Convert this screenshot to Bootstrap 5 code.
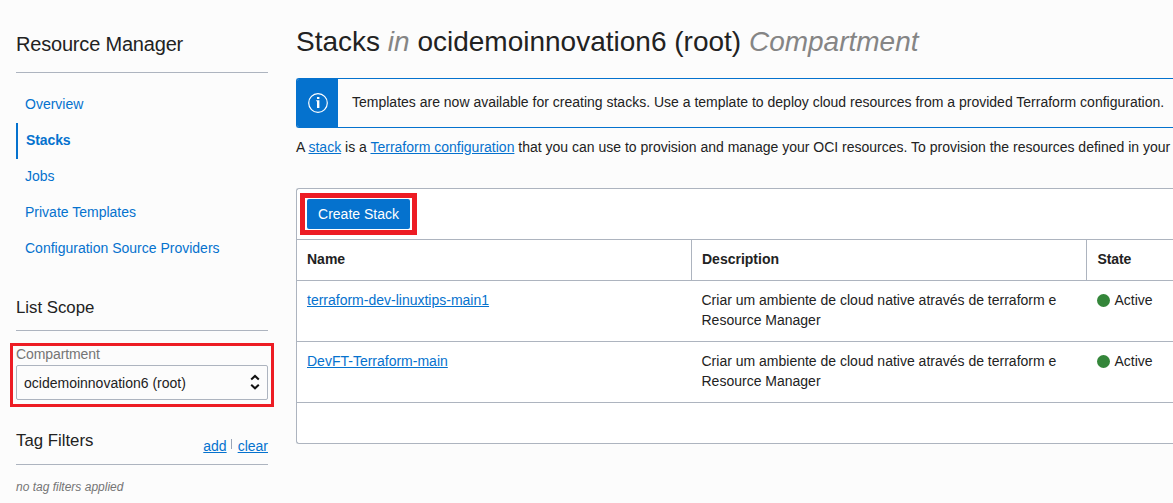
<!DOCTYPE html>
<html lang="en">
<head>
<meta charset="utf-8">
<meta name="viewport" content="width=device-width, initial-scale=1">
<title>Resource Manager - Stacks</title>
<link href="https://cdn.jsdelivr.net/npm/bootstrap@5.3.0/dist/css/bootstrap.min.css" rel="stylesheet">
<style>
  :root { --line: #adb4bf; --blue: #0572ce; --red: #ed1c24; }
  body { font: 14px/20px "Liberation Sans", Arial, sans-serif; color: #222; background: #fcfcfc; height: 503px; }
  a { color: var(--blue); text-underline-offset: 1px; }
  h1, h2, h3 { font-weight: 400; margin: 0; color: #222; }
  .side { width: 252px; margin-left: 16px; }
  .side h2 { font-size: 20px; line-height: 24px; letter-spacing: -.19px; padding: 32px 0 16px; border-bottom: 1px solid var(--line); }
  .side h3 { font-size: 16.8px; line-height: 20px; }
  .side-nav { padding-top: 14px; }
  .side-nav .nav-link { padding: 7px 9px 9px; color: var(--blue); }
  .side-nav .nav-link.active { padding-left: 8px; border-left: 2px solid var(--blue); font-weight: 700; letter-spacing: -.1px; }
  .scope-title { margin-top: 31px !important; padding-bottom: 12px; border-bottom: 1px solid var(--line); }
  .scope-box { margin: 12px -6px 0; border: 3px solid var(--red); height: 64px; padding: 0 3px; }
  .scope-box label { color: #757575; line-height: 17px; height: 19px; display: block; letter-spacing: -.1px; }
  .picker { height: 35px; border: 1px solid var(--line); border-radius: 2px; padding: 0 7px; background: #fcfcfc; }
  .picker svg { margin-top: -2px; }
  .tags { margin-top: 24px; height: 34px; border-bottom: 1px solid var(--line); }
  .tag-links { padding-top: 5px; }
  .tag-links i { width: 1px; height: 10px; margin: 3px 6px 0 4px; background: #9aa5b8; }
  .no-tags { font-size: 12px; font-style: italic; color: #757575; margin-top: 12px; }
  .main-area { margin-left: 28px; min-width: 0; }
  h1 { font-size: 28px; line-height: 32px; padding-top: 26px; white-space: nowrap; }
  h1 em { color: #858585; }
  .notice { margin-top: 20px; height: 50px; border: 1px solid var(--blue); border-right: 0; border-radius: 3px 0 0 3px; overflow: hidden; }
  .notice-icon { width: 41px; background: var(--blue); }
  .notice-text { padding: 13px 0 13px 14px; white-space: nowrap; }
  .intro { margin: 9px 0 0; white-space: nowrap; }
  .stack-list { margin-top: 31px; border: 1px solid var(--line); border-right: 0; border-radius: 3px 0 0 3px; background: #fff; height: 256px; }
  .toolbar { height: 50px; padding: 4px 3px; }
  .mark-box { border: 5px solid var(--red); width: 117px; height: 42px; padding: 1px 2px; }
  .btn-create { width: 103px; height: 30px; padding: 0; border: 0; border-radius: 2px; background: var(--blue); color: #fff; font-size: 14px; line-height: 30px; }
  .stack-table { table-layout: fixed; margin: 0; width: 100%; }
  .stack-table > :not(caption) > * > * { padding: 9px 0 11px 10px; border: 0; border-top: 1px solid var(--line); color: #222; background: transparent; }
  .stack-table > tbody > tr:last-child > td { border-bottom: 1px solid var(--line); }
  .stack-table > thead > tr > th + th { border-left: 1px solid var(--line); padding-left: 10.5px; }
  .stack-table > thead > tr > th:last-child { padding-left: 11px; letter-spacing: -.1px; }
  .stack-table > tbody > tr > td:nth-child(2) { padding: 9px 20px 11px 10.5px; }
  .stack-table > tbody > tr > td:last-child { padding-left: 10.5px; }
  .dot { display: inline-block; width: 13px; height: 13px; border-radius: 50%; background: #34863a; vertical-align: -2px; margin-right: 5px; }
</style>
</head>
<body class="overflow-hidden">
<div class="d-flex">
  <aside class="side flex-shrink-0">
    <h2>Resource Manager</h2>
    <nav class="nav flex-column side-nav">
      <a class="nav-link" href="#">Overview</a>
      <a class="nav-link active" href="#">Stacks</a>
      <a class="nav-link" href="#">Jobs</a>
      <a class="nav-link" href="#">Private Templates</a>
      <a class="nav-link" href="#">Configuration Source Providers</a>
    </nav>
    <h3 class="scope-title">List Scope</h3>
    <div class="scope-box">
      <label>Compartment</label>
      <div class="picker d-flex align-items-center justify-content-between">
        <span>ocidemoinnovation6 (root)</span>
        <svg width="10" height="16" viewBox="0 0 10 16" fill="none" stroke="#111" stroke-width="2"><path d="M1.2 5.5 5 1.9l3.8 3.6M1.2 10.7 5 14.3l3.8-3.6"/></svg>
      </div>
    </div>
    <div class="tags d-flex justify-content-between">
      <h3>Tag Filters</h3>
      <div class="tag-links d-flex"><a href="#">add</a><i></i><a href="#">clear</a></div>
    </div>
    <div class="no-tags">no tag filters applied</div>
  </aside>
  <main class="main-area flex-grow-1">
    <h1>Stacks <em>in</em> ocidemoinnovation6 (root) <em>Compartment</em></h1>
    <div class="notice d-flex">
      <div class="notice-icon d-flex align-items-center justify-content-center flex-shrink-0">
        <svg width="20" height="20" viewBox="0 0 20 20"><circle cx="10" cy="10" r="9.3" fill="none" stroke="#fff" stroke-width="1.2"/><path fill="#fff" d="M9 4h2.4v2H9zM8.2 7.2h3.2V15H9V8.2h-.8z"/></svg>
      </div>
      <div class="notice-text">Templates are now available for creating stacks. Use a template to deploy cloud resources from a provided Terraform configuration.</div>
    </div>
    <p class="intro">A <a href="#">stack</a> is a <a href="#">Terraform configuration</a> that you can use to provision and manage your OCI resources. To provision the resources defined in your</p>
    <section class="stack-list">
      <div class="toolbar"><div class="mark-box"><button class="btn btn-create d-block" type="button">Create Stack</button></div></div>
      <table class="table stack-table">
        <colgroup><col style="width:394px"><col style="width:395px"><col></colgroup>
        <thead><tr><th>Name</th><th>Description</th><th>State</th></tr></thead>
        <tbody>
          <tr><td><a href="#">terraform-dev-linuxtips-main1</a></td><td>Criar um ambiente de cloud native através de terraform e Resource Manager</td><td><span class="dot"></span>Active</td></tr>
          <tr><td><a href="#">DevFT-Terraform-main</a></td><td>Criar um ambiente de cloud native através de terraform e Resource Manager</td><td><span class="dot"></span>Active</td></tr>
        </tbody>
      </table>
    </section>
  </main>
</div>
<script src="https://cdn.jsdelivr.net/npm/bootstrap@5.3.0/dist/js/bootstrap.bundle.min.js"></script>
</body>
</html>
